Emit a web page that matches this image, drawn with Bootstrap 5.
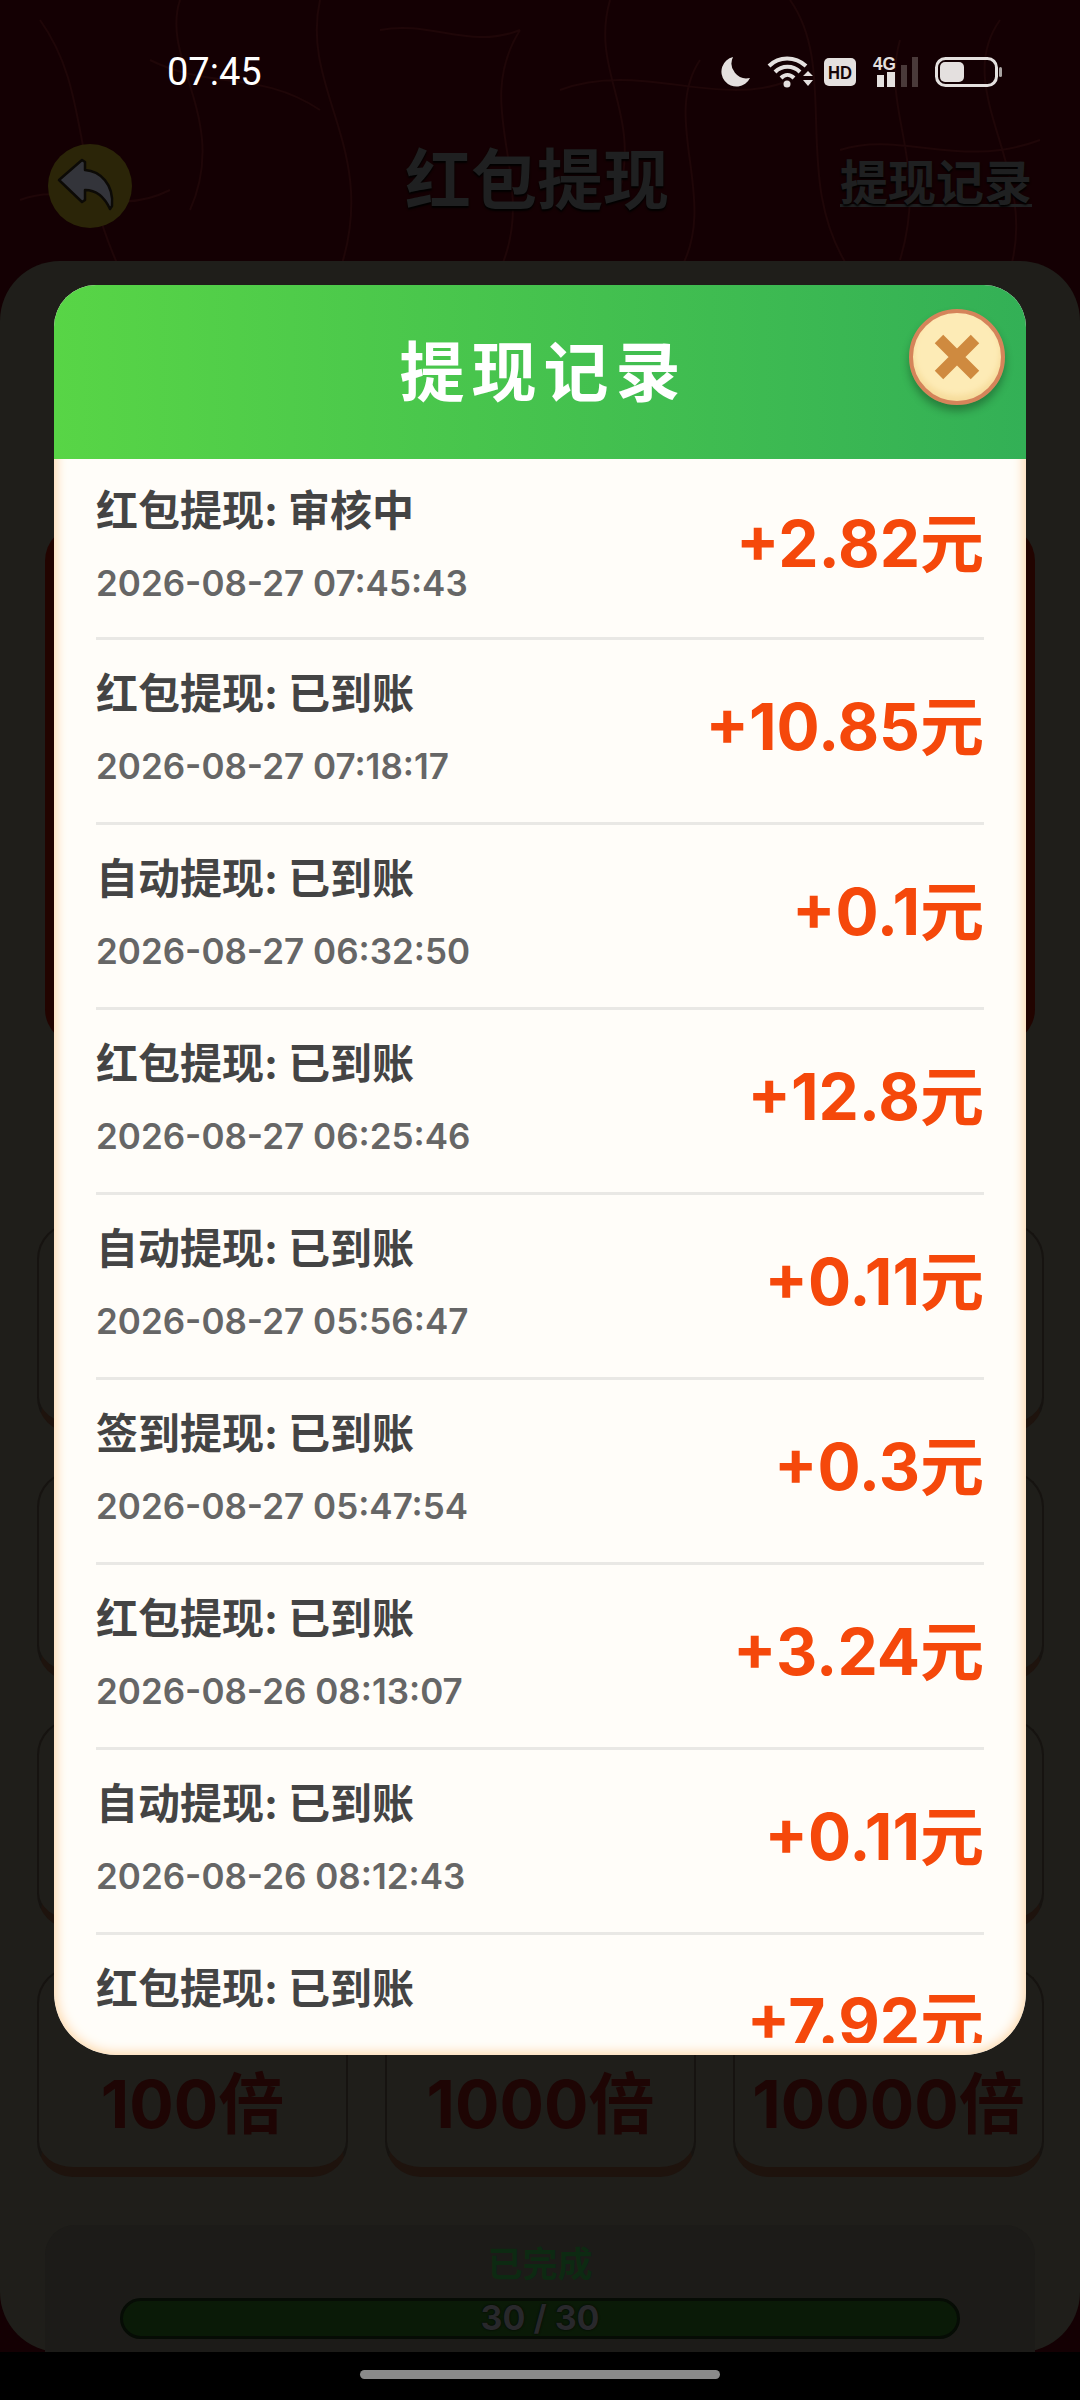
<!DOCTYPE html>
<html lang="zh-CN">
<head>
    <meta charset="UTF-8">
    <meta name="viewport" content="width=device-width, initial-scale=1.0">
    <title>提现记录</title>
    <link href="https://cdn.jsdelivr.net/npm/bootstrap@5.3.3/dist/css/bootstrap.min.css" rel="stylesheet">
    <style>
        body {
            margin: 0;
            background: #000;
            font-family: "Inter", "Noto Sans CJK SC", sans-serif;
        }
        .phone {
            width: 1080px;
            height: 2400px;
            background: #140003;
            overflow: hidden;
        }
        .wood-lines {
            left: 0;
            top: 0;
        }
        .status-row {
            height: 144px;
            padding: 0 78px 0 167px;
            color: #fff;
            z-index: 1;
        }
        .clock-text {
            font-family: "Roboto", sans-serif;
            font-size: 38px;
            line-height: 1;
        }
        .icon-gap-wide {
            margin-right: 17px;
        }
        .icon-gap-tight {
            margin-right: 11px;
        }
        .top-row {
            height: 117px;
            padding: 0 48px;
            z-index: 1;
        }
        .back-round {
            width: 84px;
            height: 84px;
            margin-top: -33px;
        }
        .page-title {
            left: 405px;
            top: -14px;
            font-family: "Noto Sans CJK SC", sans-serif;
            font-size: 66px;
            font-weight: 700;
            line-height: 90px;
            color: #1f2021;
            text-shadow: 0 2px 2px #000;
        }
        .record-link {
            margin-top: -44px;
            font-family: "Noto Sans CJK SC", sans-serif;
            font-size: 48px;
            font-weight: 700;
            line-height: 50px;
            color: #1f2021;
            border-bottom: 3px solid #1f2021;
            text-shadow: 0 2px 2px #000;
        }
        .sheet {
            height: 2091px;
            padding: 264px 37px 0;
            background: #1f1e1a;
            border-radius: 60px;
            z-index: 1;
        }
        .red-panel {
            height: 520px;
            margin: 0 8px 178px;
            background: #220400;
            border-radius: 36px;
        }
        .mult-grid {
            display: grid;
            grid-template-columns: repeat(3, 311px);
            grid-auto-rows: 210px;
            column-gap: 37px;
            row-gap: 38px;
        }
        .mult-btn {
            background: #1f1e1a;
            border: 2px solid #161310;
            border-bottom: 10px solid #1e130d;
            border-radius: 36px;
            color: #1e0504;
            font-size: 66px;
            font-weight: 700;
            padding-top: 86px;
        }
        .done-panel {
            height: 127px;
            margin: 48px 8px 0;
            background: #1c1b18;
            border-radius: 30px 30px 0 0;
        }
        .done-text {
            padding-top: 16px;
            font-family: "Noto Sans CJK SC", sans-serif;
            font-size: 35px;
            font-weight: 700;
            line-height: 42px;
            color: #0d2a12;
        }
        .done-bar {
            height: 41px;
            margin: 15px 75px 0;
            background: #0a1a07;
            border: 3px solid #060c05;
            border-radius: 21px;
            font-size: 34px;
            font-weight: 700;
            line-height: 34px;
            color: #28282b;
            text-shadow: 0 0 2px #000;
        }
        .bottom-nav {
            height: 48px;
            background: #000;
        }
        .home-pill {
            width: 360px;
            height: 9px;
            margin-top: 18px;
            background: #8a8a8a;
            border-radius: 5px;
        }
        .record-modal {
            left: 54px;
            top: 285px;
            width: 972px;
            height: 1770px;
            background: #fffdf9;
            border-radius: 42px 42px 62px 62px;
            overflow: hidden;
            z-index: 5;
        }
        .record-modal::after {
            content: "";
            position: absolute;
            inset: 150px 0 0 0;
            clip-path: inset(24px 0 0 0);
            border-radius: 0 0 62px 62px;
            box-shadow: inset 0 0 12px 2px #fdd6a6;
            pointer-events: none;
        }
        .modal-top {
            height: 174px;
            padding-left: 7px;
            background: linear-gradient(90deg, #58d546, #33b056);
            color: #fff;
            font-family: "Noto Sans CJK SC", sans-serif;
            font-size: 65px;
            font-weight: 700;
            letter-spacing: 7px;
            line-height: 166px;
        }
        .close-round {
            right: 21px;
            top: 24px;
            width: 96px;
            height: 96px;
            background: radial-gradient(circle at 50% 45%, #fdebb6 60%, #fde2a0 100%);
            border: 4px solid #d5845a;
            border-radius: 50%;
            box-shadow: 0 6px 9px rgba(0, 0, 0, .3), inset 0 -5px 6px #f6dc9c;
        }
        .record-list {
            height: 1584px;
            padding: 0 42px;
            overflow: hidden;
        }
        .record-row {
            height: 185px;
            padding-bottom: 8px;
            border-bottom: 3px solid #e9e8e5;
        }
        .record-row:first-child {
            height: 181px;
        }
        .record-name {
            font-size: 42px;
            font-weight: 700;
            line-height: 52px;
            color: #444;
        }
        .record-date {
            margin-top: 26px;
            font-size: 35px;
            font-weight: 600;
            line-height: 40px;
            color: #666;
        }
        .record-amt {
            font-size: 64px;
            font-weight: 700;
            line-height: 80px;
            color: #f5480b;
        }
    </style>
</head>
<body>
<div class="phone position-relative d-flex flex-column">
    <svg class="wood-lines position-absolute" width="1080" height="270" fill="none" stroke="#1f0608" stroke-width="2">
        <path d="M40 20C90 90 70 160 120 270M180 0C160 60 230 120 190 210M320 0C300 90 380 150 340 270M520 30C470 110 540 180 500 270M610 0C590 70 640 110 620 190M700 60C660 120 720 200 680 270M790 0C840 70 790 180 850 270M900 40C880 110 930 160 900 260M1000 20C950 90 1040 170 1010 270M150 60C210 90 260 70 320 110M560 90C640 60 720 110 790 80M840 150C900 130 960 170 1040 140M20 200C70 180 110 220 170 190M380 30C430 20 470 50 520 30"/>
    </svg>

    <!-- status bar -->
    <div class="status-row position-relative d-flex align-items-center justify-content-between">
        <span class="clock-text">07:45</span>
        <div class="d-flex align-items-center">
            <svg class="icon-gap-wide" width="30" height="30" viewBox="0 0 30 30"><path d="M13 0A15 15 0 1 0 30 21A15 15 0 0 1 13 0Z" fill="#e4e0df"/></svg>
            <svg class="icon-gap-tight" width="46" height="32" viewBox="0 0 46 32" fill="none" stroke="#e4e0df" stroke-width="4">
                <path d="M2 10C12 0 28 0 39 10M8 16C15 9 26 9 33 16M14 22C18 18 23 18 27 22"/>
                <circle cx="20" cy="28" r="3.5" fill="#e4e0df" stroke="none"/>
                <path d="M36 20l5-5 5 5ZM36 24l5 6 5-6Z" fill="#e4e0df" stroke="none"/>
            </svg>
            <svg class="icon-gap-wide" width="32" height="28" viewBox="0 0 32 28">
                <rect width="32" height="28" rx="5" fill="#e4e0df"/>
                <text x="16" y="21" text-anchor="middle" font-family="Liberation Sans" font-size="19" font-weight="700" textLength="24" lengthAdjust="spacingAndGlyphs" fill="#160508">HD</text>
            </svg>
            <svg class="overflow-visible me-3" width="46" height="34" viewBox="0 0 46 34">
                <text x="0" y="15" font-family="Liberation Sans" font-size="19" font-weight="700" textLength="23" lengthAdjust="spacingAndGlyphs" fill="#e4e0df">4G</text>
                <rect x="4" y="20" width="7" height="12" fill="#e4e0df"/>
                <rect x="14" y="17" width="8" height="15" fill="#e4e0df"/>
                <rect x="28" y="10" width="6" height="22" fill="#4a3a3a"/>
                <rect x="39" y="2" width="6" height="30" fill="#4a3a3a"/>
            </svg>
            <svg width="67" height="30" viewBox="0 0 67 30">
                <rect x="1.5" y="1.5" width="60" height="27" rx="9" fill="none" stroke="#e4e0df" stroke-width="3"/>
                <rect x="5" y="5" width="24" height="20" rx="5" fill="#e4e0df"/>
                <rect x="64" y="10" width="3" height="10" rx="1.5" fill="#a9a4a3"/>
            </svg>
        </div>
    </div>

    <!-- app header -->
    <div class="top-row position-relative d-flex align-items-center justify-content-between">
        <svg class="back-round" viewBox="0 0 84 84">
            <circle cx="42" cy="42" r="42" fill="#2b2508"/>
            <path d="M11 36L34 16L37 18V26C52 27 66 40 64 62L62 65C56 52 48 46 37 46V56L34 58Z" fill="#33343a" stroke="#0c0a06" stroke-width="2.5" stroke-linejoin="round"/>
        </svg>
        <span class="page-title position-absolute">红包提现</span>
        <span class="record-link">提现记录</span>
    </div>

    <!-- page behind the dialog -->
    <div class="sheet">
        <div class="red-panel"></div>
        <div class="mult-grid">
            <div class="mult-btn"></div><div class="mult-btn"></div><div class="mult-btn"></div>
            <div class="mult-btn"></div><div class="mult-btn"></div><div class="mult-btn"></div>
            <div class="mult-btn"></div><div class="mult-btn"></div><div class="mult-btn"></div>
            <div class="mult-btn text-center">100倍</div><div class="mult-btn text-center">1000倍</div><div class="mult-btn text-center">10000倍</div>
        </div>
        <div class="done-panel text-center">
            <div class="done-text">已完成</div>
            <div class="done-bar">30 / 30</div>
        </div>
    </div>

    <div class="bottom-nav d-flex justify-content-center">
        <div class="home-pill"></div>
    </div>

    <!-- dialog -->
    <div class="record-modal position-absolute">
        <div class="modal-top text-center">提现记录</div>
        <div class="close-round position-absolute d-flex align-items-center justify-content-center">
            <svg width="48" height="48" viewBox="0 0 48 48"><path d="M6 6L42 42M42 6L6 42" stroke="#cf8a3f" stroke-width="12"/></svg>
        </div>
        <div class="record-list">
            <div class="record-row d-flex justify-content-between align-items-center">
                <div><div class="record-name">红包提现: 审核中</div><div class="record-date">2026-08-27 07:45:43</div></div>
                <div class="record-amt">+2.82元</div>
            </div>
            <div class="record-row d-flex justify-content-between align-items-center">
                <div><div class="record-name">红包提现: 已到账</div><div class="record-date">2026-08-27 07:18:17</div></div>
                <div class="record-amt">+10.85元</div>
            </div>
            <div class="record-row d-flex justify-content-between align-items-center">
                <div><div class="record-name">自动提现: 已到账</div><div class="record-date">2026-08-27 06:32:50</div></div>
                <div class="record-amt">+0.1元</div>
            </div>
            <div class="record-row d-flex justify-content-between align-items-center">
                <div><div class="record-name">红包提现: 已到账</div><div class="record-date">2026-08-27 06:25:46</div></div>
                <div class="record-amt">+12.8元</div>
            </div>
            <div class="record-row d-flex justify-content-between align-items-center">
                <div><div class="record-name">自动提现: 已到账</div><div class="record-date">2026-08-27 05:56:47</div></div>
                <div class="record-amt">+0.11元</div>
            </div>
            <div class="record-row d-flex justify-content-between align-items-center">
                <div><div class="record-name">签到提现: 已到账</div><div class="record-date">2026-08-27 05:47:54</div></div>
                <div class="record-amt">+0.3元</div>
            </div>
            <div class="record-row d-flex justify-content-between align-items-center">
                <div><div class="record-name">红包提现: 已到账</div><div class="record-date">2026-08-26 08:13:07</div></div>
                <div class="record-amt">+3.24元</div>
            </div>
            <div class="record-row d-flex justify-content-between align-items-center">
                <div><div class="record-name">自动提现: 已到账</div><div class="record-date">2026-08-26 08:12:43</div></div>
                <div class="record-amt">+0.11元</div>
            </div>
            <div class="record-row d-flex justify-content-between align-items-center">
                <div><div class="record-name">红包提现: 已到账</div><div class="record-date">&nbsp;</div></div>
                <div class="record-amt">+7.92元</div>
            </div>
        </div>
    </div>
</div>
<script src="https://cdn.jsdelivr.net/npm/bootstrap@5.3.3/dist/js/bootstrap.bundle.min.js"></script>
</body>
</html>
